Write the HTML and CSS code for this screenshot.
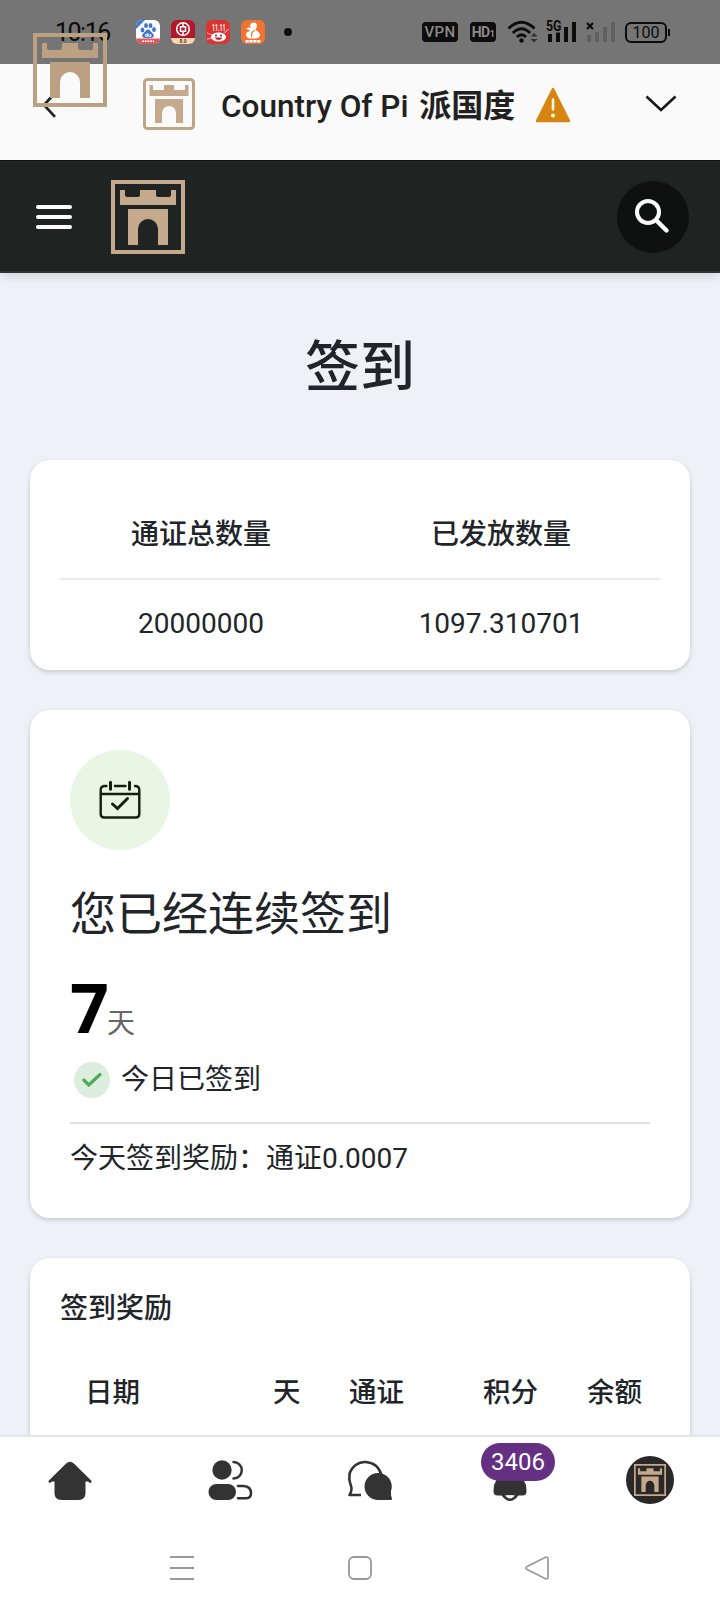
FILE: index.html
```html
<!DOCTYPE html>
<html lang="zh-CN">
<head>
<meta charset="utf-8">
<meta name="viewport" content="width=device-width, initial-scale=1">
<title>签到</title>
<link rel="stylesheet" href="styles.css">
</head>
<body>
<svg class="defs" width="0" height="0">
  <symbol id="castle" viewBox="0 0 74 74">
    <path d="M9 10h5v5q0 2 2 2h11q2 0 2-2v-5h16v5q0 2 2 2h11q2 0 2-2v-5h5v15H9z"/>
    <path d="M17 29h40v36H47V49a10 10 0 0 0-20 0v16H17z"/>
  </symbol>
</svg>
<div class="screen">
  <div class="status">
    <span class="time">10:16</span>
    <div class="apps">
      <svg width="24" height="24" viewBox="0 0 24 24">
        <rect width="24" height="24" rx="6" fill="#fff"/>
        <path d="M0 9V6a6 6 0 0 1 6-6h3z" fill="#3b7bd8"/>
        <g fill="#3f74d0"><ellipse cx="6.500" cy="10" rx="1.900" ry="2.500"/><ellipse cx="10" cy="5.500" rx="1.900" ry="2.500"/><ellipse cx="14.500" cy="5.500" rx="1.900" ry="2.500"/><ellipse cx="18" cy="9.500" rx="1.900" ry="2.500"/><path d="M12 9.500c2 0 2.500 2 4 3.300 3 2.400 2 5.200-1 5.200H9c-3 0-4-2.800-1-5.200 1.500-1.300 2-3.300 4-3.300z"/></g>
        <text x="12" y="17" class="tiny" font-size="6" fill="#fff">du</text>
        <path d="M0 18.500h24A6 6 0 0 1 18 24H6a6 6 0 0 1-6-5.500z" fill="#e0565c"/>
        <path d="M6 21.300h12" stroke="#fff" stroke-width="1.600" stroke-dasharray="2 .7"/>
      </svg>
      <svg width="24" height="24" viewBox="0 0 24 24">
        <rect width="24" height="24" rx="6" fill="#b3182a"/>
        <circle cx="12" cy="9" r="6.300" fill="none" stroke="#fff" stroke-width="1.600"/>
        <path d="M12 3v3.500m0 5V15M9.500 6.800h5v4.400h-5z" fill="none" stroke="#fff" stroke-width="1.500"/>
        <path d="M0 18h24a6 6 0 0 1-6 6H6a6 6 0 0 1-6-6z" fill="#f6d9b0"/>
        <text x="12" y="23" class="tiny" font-size="5" fill="#7a3220">8.0</text>
      </svg>
      <svg width="24" height="24" viewBox="0 0 24 24">
        <rect width="24" height="24" rx="6" fill="#dd3430"/>
        <path d="M1 13l5 2M23 9l-5 4M1 19l5-1" stroke="#f38ab0" stroke-width="1.300"/>
        <text x="6" y="11" font-weight="700" font-family="Roboto, sans-serif" font-size="9" fill="#fff" textLength="13.500" lengthAdjust="spacingAndGlyphs">11.11</text>
        <ellipse cx="12.500" cy="17" rx="7.500" ry="4.500" fill="#fff"/>
        <path d="M8.500 17.500q4 5 8 0z" fill="#c91d26"/>
        <circle cx="10" cy="15.500" r=".9" fill="#222"/><circle cx="15" cy="15.500" r=".9" fill="#222"/>
      </svg>
      <svg width="24" height="24" viewBox="0 0 24 24">
        <rect width="24" height="24" rx="6" fill="#ef7432"/>
        <path d="M10 8C8 6 9.500 2.500 12.500 2.500c3.500 0 4.500 3.500 2.300 6-1.600 2 4.200 2.500 4.200 6.500 0 2.500-2.500 3.500-5 3.500H9.500C6.500 18.500 5 16.500 5 14.500c0-2.500 3-2.500 4-4.500L5 9q1.500-2.500 5-1z" fill="#fff"/>
        <path d="M11 17q-2-5 3-6.500" stroke="#ef7432" stroke-width="1.300" fill="none"/>
        <path d="M4.500 21.200h15" stroke="#fff" stroke-width="2.600" stroke-dasharray="3.200 .7"/>
      </svg>
    </div>
    <span class="dot"></span>
    <span class="tag vpn">VPN</span>
    <span class="tag hd">HD<small>1</small></span>
    <svg class="wifi" width="31" height="24" viewBox="0 0 31 24">
      <g fill="none" stroke="#0c0c0c" stroke-width="2.800"><path d="M1.500 8.500q13-12.500 26 0"/><path d="M5.800 13q8.700-8.500 17.400 0"/><path d="M10 17q4.500-4.500 9 0"/></g>
      <circle cx="14.500" cy="20.500" r="2.200" fill="#0c0c0c"/>
      <path d="M23.500 16.500l3.500-3.500 3.500 3.500zm0 2.500h7L27 22.500z" fill="#303030"/>
    </svg>
    <svg class="signal" width="32" height="24" viewBox="0 0 32 24">
      <text x="0" y="11" class="net" textLength="15.500" lengthAdjust="spacingAndGlyphs">5G</text>
      <path d="M2 14h4v8H2zm8-1.500h4V22h-4zm8-5.500h4v15h-4zm8-5h4v20h-4z" fill="#0c0c0c"/>
    </svg>
    <svg class="nosim" width="30" height="24" viewBox="0 0 30 24">
      <path d="M1 3l6 6m0-6L1 9" stroke="#0c0c0c" stroke-width="2.200"/>
      <path d="M1 15h4v7H1zm8-3h4v10H9zm8-5h4v15h-4zm8-5h4v20h-4z" fill="#606060"/>
    </svg>
    <span class="battery">100</span>
  </div>

  <div class="titlebar">
    <svg class="back" width="14" height="26" viewBox="0 0 14 26"><path d="M13 1L2 13l11 11.800" fill="none" stroke="#222" stroke-width="2.700"/></svg>
    <svg class="site-icon" width="52" height="52" viewBox="0 0 52 52" fill="#c4a98c">
      <rect x="1.500" y="1.500" width="49" height="49" rx="3" fill="none" stroke="#bea588" stroke-width="3"/>
      <path d="M6.500 7H10v5h11V7h10v5h11V7h3.500v11h-39zM12 21h28v24h-7V35a7 7 0 0 0-14 0v10h-7z"/>
    </svg>
    <span class="site-name">Country Of Pi <b>派国度</b></span>
    <svg class="warn" width="36" height="36" viewBox="0 0 36 36">
      <path d="M18 2L34 34H2z" fill="#d6860f" stroke="#d6860f" stroke-width="2.500" stroke-linejoin="round"/>
      <path d="M18 12.500v10" stroke="#fdf6e8" stroke-width="2.600" stroke-linecap="round"/><circle cx="18" cy="28.500" r="2" fill="#fdf6e8"/>
    </svg>
    <svg class="down" width="32" height="18" viewBox="0 0 32 18"><path d="M1.500 1.500L16 15 30.500 1.500" fill="none" stroke="#151515" stroke-width="2.500"/></svg>
  </div>

  <header class="header">
    <div class="burger"><i></i><i></i><i></i></div>
    <svg class="brand" width="74" height="74" viewBox="0 0 74 74" fill="#c4a98c"><rect x="2" y="2" width="70" height="70" fill="none" stroke="#c4a98c" stroke-width="4"/><use href="#castle"/></svg>
    <div class="search"><svg width="36" height="36" viewBox="0 0 36 36" fill="none" stroke="#fff"><circle cx="14" cy="14" r="11" stroke-width="4"/><path d="M23.500 23.500l9 9" stroke-width="4.400" stroke-linecap="round"/></svg></div>
  </header>

  <main class="content">
    <h1>签到</h1>
    <section class="card totals">
      <div class="row head"><span>通证总数量</span><span>已发放数量</span></div>
      <div class="row"><span>20000000</span><span>1097.310701</span></div>
    </section>
    <section class="card checkin">
      <div class="calendar">
        <svg width="42" height="40" viewBox="0 0 42 40" fill="none" stroke="#14200f" stroke-width="2.400" stroke-linecap="round">
          <path d="M7.500 6H6Q1.700 6 1.700 10v24q0 3.500 3.500 3.500h31.600q3.500 0 3.500-3.500V10q0-4-4.300-4M16 6h10.500M2 14h38"/>
          <path d="M11.500 2.300v7M30.500 2.300v7M13.500 24l5 4.500 10-10" stroke-width="3"/>
        </svg>
      </div>
      <h2>您已经连续签到</h2>
      <div class="days"><b>7</b><span>天</span></div>
      <div class="today">
        <span class="done"><svg width="20" height="16" viewBox="0 0 20 16"><path d="M1.800 8l5 5L18 2.500" fill="none" stroke="#55aa58" stroke-width="3.200" stroke-linecap="round"/></svg></span>
        <span>今日已签到</span>
      </div>
      <p class="reward">今天签到奖励：通证0.0007</p>
    </section>
    <section class="card rewards">
      <h3>签到奖励</h3>
      <div class="columns"><span>日期</span><span>天</span><span>通证</span><span>积分</span><span>余额</span></div>
    </section>
  </main>

  <nav class="tabs">
    <a class="home"><svg width="44" height="42" viewBox="0 0 44 42"><path d="M1.800 22.500L19 5.500q3-3 6 0l17.200 17" fill="#333" stroke="#333" stroke-width="2.600" stroke-linecap="round"/><path d="M22 4L37.500 19v15q0 7-7 7h-17q-7 0-7-7V19z" fill="#333"/></svg></a>
    <a><svg width="44" height="42" viewBox="0 0 44 42"><g fill="#333"><circle cx="14" cy="11" r="9.700"/><rect x=".5" y="25" width="27.500" height="16" rx="8"/></g><g fill="none" stroke="#333" stroke-width="2.500" stroke-linecap="round"><path d="M25.500 3a8 8 0 0 1 0 16.500M30 27h5.500q7.500.5 7.500 7 0 5-4.500 5.200H30"/></g></svg></a>
    <a><svg width="46" height="42" viewBox="0 0 46 42"><path d="M14 36H2.500Q5.500 31 4 27 1.500 21 2.500 15C5 7 12 2.500 18.500 3 27 3.500 32 8 34.500 16" fill="none" stroke="#333" stroke-width="2.600" stroke-linejoin="round"/><path d="M31 14a13.500 13.500 0 0 1 13 18q-.5 3 1 8 .2 1-1 1H31a13.500 13.500 0 0 1 0-27z" fill="#333"/></svg></a>
    <a class="bell"><svg width="34" height="42" viewBox="0 0 34 42"><path d="M5 18a12 12 0 0 1 24 0l4 8 .5 6q0 4.500-4 4.500h-25q-4 0-4-4.500l.5-6z" fill="#333"/><path d="M9.500 35.500q7.500 10.500 15 0" fill="none" stroke="#333" stroke-width="2.600"/><path d="M13 36.200h8q-4 3-8 0z" fill="#fff"/></svg><span class="badge">3406</span></a>
    <a><span class="avatar"><svg width="32" height="32" viewBox="0 0 74 74" fill="#c4a98c"><rect x="2" y="2" width="70" height="70" fill="none" stroke="#c4a98c" stroke-width="4"/><use href="#castle"/></svg></span></a>
  </nav>

  <div class="sysnav">
    <svg width="24" height="26" viewBox="0 0 24 26"><path d="M0 2h24M0 13h24M0 24h24" stroke="#999" stroke-width="2"/></svg>
    <svg width="24" height="24" viewBox="0 0 24 24"><rect x="1" y="1" width="22" height="22" rx="5" fill="none" stroke="#999" stroke-width="1.800"/></svg>
    <svg width="24" height="24" viewBox="0 0 24 24"><path d="M20.500 1.300L2.200 10.400q-2.400 1.600 0 3.200l18.300 9.100q2.500.7 2.500-1.700V3q0-2.400-2.500-1.700z" fill="none" stroke="#999" stroke-width="1.700"/></svg>
  </div>

  <svg class="floating-logo" width="74" height="74" viewBox="0 0 74 74" fill="#bca082"><rect x="2" y="2" width="70" height="70" fill="none" stroke="#bca082" stroke-width="4"/><use href="#castle"/></svg>
</div>
</body>
</html>
```
FILE: styles.css
```css
* { box-sizing: border-box; }
body {
  margin: 0;
  font-family: Roboto, "Noto Sans CJK SC", sans-serif;
  font-size: 28px;
  color: #212529;
  background: #fff;
}
h1, h2, h3, p { margin: 0; }
svg { display: block; flex: none; overflow: visible; }
.defs { position: absolute; }
.screen {
  position: relative;
  display: flex;
  flex-direction: column;
  width: 720px;
  height: 1612px;
  overflow: hidden;
}

.status {
  flex: none;
  display: flex;
  align-items: center;
  height: 64px;
  padding-left: 55px;
  background: #757575;
  color: #0c0c0c;
}
.time { width: 81px; font-size: 25px; letter-spacing: -1.500px; }
.apps { display: flex; gap: 11px; }
.tiny { font-family: Roboto, sans-serif; font-weight: 700; text-anchor: middle; }
.dot { width: 8px; height: 8px; margin: 0 130px 0 19px; border-radius: 50%; background: #0c0c0c; }
.tag {
  display: flex;
  justify-content: center;
  align-items: center;
  height: 20px;
  border-radius: 4px;
  background: #0c0c0c;
  color: #8b8b8b;
  font-weight: 700;
}
.vpn { width: 36px; font-size: 15px; font-weight: 500; letter-spacing: .3px; }
.hd { width: 26px; margin-left: 12px; font-size: 14px; letter-spacing: -.5px; }
.hd small { align-self: flex-end; font-size: 9px; line-height: 15px; }
.wifi { margin-left: 11px; }
.signal { margin-left: 8px; }
.net { font: 700 14px Roboto, sans-serif; fill: #0c0c0c; }
.nosim { margin-left: 8px; }
.battery {
  position: relative;
  width: 42px;
  height: 21px;
  margin-left: 9px;
  border: 2px solid #0c0c0c;
  border-radius: 6px;
  font-size: 16px;
  line-height: 18px;
  text-align: center;
}
.battery::after {
  content: "";
  position: absolute;
  right: -5px;
  top: 5px;
  width: 2px;
  height: 7px;
  background: #0c0c0c;
}

.titlebar {
  flex: none;
  display: flex;
  align-items: center;
  height: 96px;
  padding: 0 43px 16px 42px;
  background: #fafafa;
}
.back { margin-top: 1px; }
.site-icon { margin-left: 87px; }
.site-name { width: 296px; margin: -2px 0 0 26px; font-size: 31.500px; font-weight: 500; white-space: nowrap; color: #212121; }
.site-name b { margin-left: 3px; font-size: 32px; font-weight: 700; }
.warn { margin: 2px 0 0 18px; }
.down { margin-left: auto; }

.header {
  position: relative;
  flex: none;
  display: flex;
  align-items: center;
  height: 113px;
  padding: 2px 31px 0 36px;
  background: #1f2322;
  border-top: 1px solid #0e1110;
  border-bottom: 2px solid #313436;
  box-shadow: 0 5px 8px -1px rgba(0, 0, 0, .11);
}
.burger { display: grid; gap: 6px; width: 36px; }
.burger i { height: 4px; border-radius: 2px; background: #fff; }
.brand { margin-left: 39px; }
.search {
  display: flex;
  align-items: center;
  justify-content: center;
  width: 72px;
  height: 72px;
  margin-left: auto;
  padding: 0 2px 2px 0;
  border-radius: 50%;
  background: #0f1110;
}

.content {
  flex: 1;
  min-height: 0;
  overflow: hidden;
  padding: 54px 30px 0;
  background: #f0f1f6;
}
h1 { height: 133px; font-size: 55px; font-weight: 500; line-height: 80px; text-align: center; }
.card {
  margin-bottom: 40px;
  border-radius: 20px;
  background: #fff;
  box-shadow: 0 2px 5px rgba(0, 0, 0, .17);
}
.totals { height: 210px; padding: 30px 30px 0; }
.row { display: grid; grid-template-columns: 282px 318px; line-height: 88px; text-align: center; }
.row.head { height: 90px; border-bottom: 2px solid #e9eaeb; font-weight: 500; line-height: 90px; }

.checkin { height: 508px; padding: 40px; }
.calendar {
  display: flex;
  align-items: center;
  justify-content: center;
  width: 100px;
  height: 100px;
  border-radius: 50%;
  background: #eaf6e4;
}
h2 { height: 115px; padding-top: 29px; font-size: 46px; font-weight: 400; line-height: 70px; }
.days { display: flex; align-items: baseline; height: 92px; line-height: 84px; }
.days b { width: 37px; font-family: "Noto Sans", sans-serif; font-size: 68px; color: #000; }
.days span { color: #666; }
.today { display: flex; align-items: center; gap: 11px; height: 67px; padding: 0 0 26px 4px; border-bottom: 2px solid #e0e1e2; }
.done { display: flex; align-items: center; justify-content: center; width: 36px; height: 36px; margin-top: 7px; border-radius: 50%; background: #dceedd; }
.reward { line-height: 70px; }

.rewards { height: 400px; padding: 30px 30px 0; }
h3 { height: 63px; font-size: 28px; font-weight: 500; line-height: 42px; }
.columns {
  display: grid;
  grid-template-columns: 188px 76px 134px 104px 60px;
  padding-left: 25px;
  font-size: 27.500px;
  font-weight: 500;
  line-height: 84px;
}

.tabs {
  position: relative;
  flex: none;
  display: grid;
  grid-template-columns: 160px repeat(4, 140px);
  height: 85px;
  border-top: 2px solid #e4e5e7;
  background: #fff;
}
.tabs a { position: relative; display: flex; justify-content: center; padding-top: 22px; }
.tabs .home { padding-right: 20px; }
.badge {
  position: absolute;
  left: 41px;
  top: 6px;
  width: 74px;
  height: 38px;
  border-radius: 19px;
  background: #653082;
  color: #fff;
  font-size: 24px;
  line-height: 38px;
  text-align: center;
}
.avatar {
  display: flex;
  align-items: center;
  justify-content: center;
  width: 48px;
  height: 48px;
  margin-top: -3px;
  border-radius: 50%;
  background: #2b2928;
}

.sysnav {
  flex: none;
  display: flex;
  align-items: center;
  justify-content: space-between;
  height: 92px;
  padding: 4px 171px 0 170px;
  background: #fff;
}
.floating-logo { position: absolute; left: 33px; top: 33px; }
```
